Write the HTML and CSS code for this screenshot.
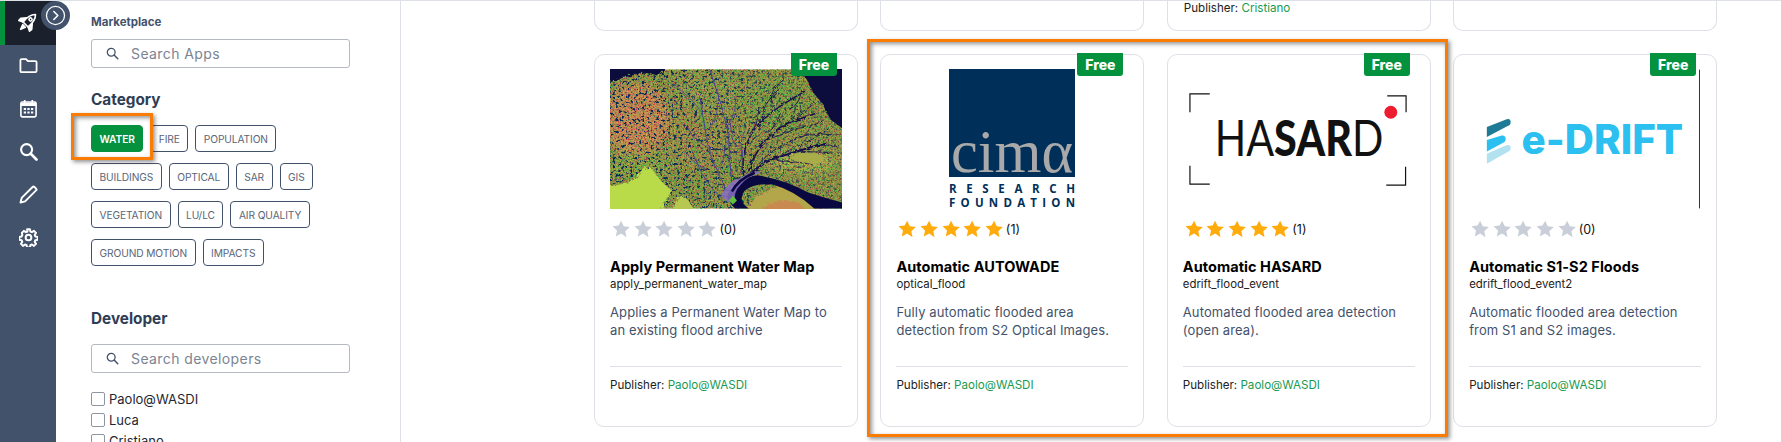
FILE: index.html
```html
<!DOCTYPE html>
<html lang="en">
<head>
<meta charset="utf-8">
<title>Marketplace</title>
<link rel="stylesheet" href="styles.css">
</head>
<body>
<svg class="defs" width="0" height="0" aria-hidden="true">
  <defs>
    <symbol id="star" viewBox="0 0 20 20"><path d="M10 .8l2.9 6.2 6.7.8-5 4.6 1.4 6.7L10 15l-6 3.3 1.4-6.7-5-4.6 6.7-.8z"/></symbol>
    <symbol id="loupe" viewBox="0 0 14 14"><circle cx="5.6" cy="5.6" r="4.2" fill="none" stroke="currentColor" stroke-width="1.4"/><path d="M8.7 8.7l4 4" stroke="currentColor" stroke-width="1.6" stroke-linecap="round"/></symbol>
    <linearGradient id="fade" x1="0" x2="1" y1="0" y2="0"><stop offset="0" stop-color="#fff"/><stop offset=".45" stop-color="#ddd"/><stop offset="1" stop-color="#555"/></linearGradient>
    <mask id="speck-mask"><rect width="234" height="140" fill="url(#fade)"/></mask>
    <filter id="mottle" x="0" y="0" width="100%" height="100%">
      <feTurbulence type="fractalNoise" baseFrequency="0.6" numOctaves="2" seed="7"/>
      <feColorMatrix values="2.6 0 0 0 -.85  0 2.4 0 0 -.72  0 0 0 0 .1  0 0 0 0 1"/>
    </filter>
    <filter id="speck" x="0" y="0" width="100%" height="100%">
      <feTurbulence type="fractalNoise" baseFrequency="0.34" numOctaves="3" seed="11"/>
      <feColorMatrix values="0 0 0 0 0  0 0 0 0 .02  0 0 0 0 .1  9 0 0 0 -5.300"/>
    </filter>
    <filter id="soft" x="-30%" y="-30%" width="160%" height="160%"><feGaussianBlur stdDeviation="5"/></filter>
    <filter id="rough" x="-10%" y="-10%" width="120%" height="120%">
      <feTurbulence type="fractalNoise" baseFrequency="0.3" numOctaves="2" seed="4" result="n"/>
      <feDisplacementMap in="SourceGraphic" in2="n" scale="6"/>
    </filter>
    <filter id="wiggle" x="-10%" y="-10%" width="120%" height="120%">
      <feTurbulence type="fractalNoise" baseFrequency="0.22" numOctaves="2" seed="9" result="n"/>
      <feDisplacementMap in="SourceGraphic" in2="n" scale="4"/>
    </filter>
  </defs>
</svg>

<nav class="rail">
  <a class="rail-item active">
    <svg class="rail-icon rocket" viewBox="0 0 20 20"><g transform="rotate(45 10 10)" fill="none" stroke="#fff" stroke-width="1.600" stroke-linejoin="round"><path d="M10 -.6C13.400 2.600 14.200 7.500 13.600 13.500H6.400C5.800 7.500 6.600 2.600 10 -.6Z"/><circle cx="10" cy="6.400" r="1.500"/><path d="M6 8L2.200 12.500 2.400 15.400 6.400 13.500ZM14 8l3.800 4.500-.2 2.900-4-1.900Z" fill="#fff"/><path d="M8.200 15.600L10 20.400l1.800-4.800Z" fill="#fff"/></g></svg>
  </a>
  <a class="rail-item"><svg class="rail-icon" viewBox="0 0 20 20"><path d="M1.500 4.500q0-1.300 1.300-1.300h4.600l2 2.200h7.800q1.300 0 1.300 1.300v9q0 1.300-1.300 1.300H2.800q-1.300 0-1.300-1.300z" fill="none" stroke="#fff" stroke-width="1.900" stroke-linejoin="round"/></svg></a>
  <a class="rail-item"><svg class="rail-icon" viewBox="0 0 20 20"><rect x="2" y="3.200" width="16" height="15.600" rx="1.600" fill="none" stroke="#fff" stroke-width="1.700"/><path d="M2 3.800h16v3.600H2z" fill="#fff"/><path d="M6 1v3M14 1v3" stroke="#fff" stroke-width="1.800"/><path d="M5 9.600h2.400v2H5zM8.800 9.600h2.400v2H8.800zM12.600 9.600H15v2h-2.400zM5 13.200h2.400v2H5zM8.800 13.200h2.400v2H8.800zM12.600 13.200H15v2h-2.400z" fill="#fff"/></svg></a>
  <a class="rail-item"><svg class="rail-icon" viewBox="0 0 20 20"><circle cx="8" cy="8" r="5.800" fill="none" stroke="#fff" stroke-width="2.200"/><path d="M12.400 12.400l6 6" stroke="#fff" stroke-width="2.800" stroke-linecap="round"/></svg></a>
  <a class="rail-item"><svg class="rail-icon" viewBox="0 0 20 20"><path d="M1.600 18.400l1.200-4.800L14.600 1.800q.7-.7 1.400 0L18.200 4q.7.7 0 1.400L6.400 17.200z" fill="none" stroke="#fff" stroke-width="2" stroke-linejoin="round"/></svg></a>
  <a class="rail-item"><svg class="rail-icon" viewBox="0 0 20 20"><circle cx="10" cy="10" r="3" fill="none" stroke="#fff" stroke-width="2.100"/><path d="M8.500 1.200h3l.5 2.500 1.600.7 2.200-1.400 2.100 2.100-1.400 2.200.7 1.600 2.500.5v3l-2.500.5-.7 1.600 1.400 2.200-2.100 2.100-2.200-1.400-1.600.7-.5 2.500h-3l-.5-2.500-1.600-.7-2.200 1.400-2.100-2.100 1.400-2.200-.7-1.600-2.500-.5v-3l2.500-.5.7-1.600L3 5.100l2.100-2.100 2.200 1.400 1.600-.7z" fill="none" stroke="#fff" stroke-width="2.100" stroke-linejoin="round"/></svg></a>
</nav>
<button class="rail-toggle" type="button" aria-label="Expand">
  <svg viewBox="0 0 20 20"><circle cx="10" cy="10" r="8.600" fill="none" stroke="#fff" stroke-width="1.200"/><path d="M8.400 6.200l3.800 3.800-3.800 3.800" fill="none" stroke="#fff" stroke-width="1.500" stroke-linecap="round" stroke-linejoin="round"/></svg>
</button>

<aside class="filters">
  <h1 class="eyebrow">Marketplace</h1>
  <label class="search"><svg class="search-icon"><use href="#loupe"/></svg><input type="text" placeholder="Search Apps"></label>
  <h2 class="section-title">Category</h2>
  <div class="chips">
    <span class="chip chip-active">WATER</span><span class="chip">FIRE</span><span class="chip">POPULATION</span>
    <span class="chip">BUILDINGS</span><span class="chip">OPTICAL</span><span class="chip">SAR</span><span class="chip">GIS</span>
    <span class="chip">VEGETATION</span><span class="chip">LU/LC</span><span class="chip">AIR QUALITY</span>
    <span class="chip">GROUND MOTION</span><span class="chip">IMPACTS</span>
  </div>
  <h2 class="section-title developer">Developer</h2>
  <label class="search"><svg class="search-icon"><use href="#loupe"/></svg><input type="text" placeholder="Search developers"></label>
  <ul class="checks">
    <li><label><input type="checkbox">Paolo@WASDI</label></li>
    <li><label><input type="checkbox">Luca</label></li>
    <li><label><input type="checkbox">Cristiano</label></li>
  </ul>
</aside>

<main class="market">
  <div class="grid">
    <div class="stub"></div>
    <div class="stub"></div>
    <div class="stub"><p class="publisher">Publisher: <a>Cristiano</a></p></div>
    <div class="stub"></div>

    <article class="card">
      <span class="badge">Free</span>
      <div class="media">
        <svg class="delta" viewBox="0 0 234 140" role="img" aria-label="Satellite image of a river delta">
          <rect width="234" height="140" fill="#6f7634"/>
          <g filter="url(#soft)">
            <ellipse cx="26" cy="50" rx="34" ry="36" fill="#c8664a"/>
            <ellipse cx="88" cy="62" rx="26" ry="38" fill="#8a7038"/>
            <ellipse cx="100" cy="22" rx="34" ry="20" fill="#76803a"/>
            <ellipse cx="165" cy="36" rx="30" ry="26" fill="#5f8432"/>
            <ellipse cx="30" cy="98" rx="30" ry="14" fill="#6e8a36"/>
            <ellipse cx="140" cy="70" rx="24" ry="20" fill="#7d7238"/>
            <ellipse cx="195" cy="92" rx="32" ry="12" fill="#9a9c40"/>
          </g>
          <rect width="234" height="140" filter="url(#mottle)" opacity=".42"/>
          <g mask="url(#speck-mask)"><rect width="234" height="140" filter="url(#speck)"/></g>
          <g filter="url(#rough)">
            <path d="M192 -4H238V62L222 50 214 34 204 22Z" fill="#0a0a3c"/>
            <path d="M-4 -4H58L50 6 34 3 14 8 -4 14Z" fill="#0a0a3c"/>
            <path d="M-4 118Q16 116 26 110 34 96 42 100 50 112 62 122 54 136 50 144H-4Z" fill="#b9da48"/>
            <path d="M64 144Q66 128 72 128 82 130 84 144Z" fill="#b6c850"/>
            <path d="M134 144Q150 122 172 118 192 124 206 134L214 144Z" fill="#b3a548"/>
            <path d="M150 144Q165 128 190 134L200 144Z" fill="#c98a50"/>
            <path d="M180 88q10-6 26-4l14 6-12 6q-14 2-28-8z" fill="#a9ad48"/>
          </g>
          <path d="M88 28Q92 40 96 50L100 58 94 62 90 44Z" fill="#5fb03a" opacity=".75"/>
          <path d="M84 70l6 30 4 34M118 90l4 30" stroke="#59b53c" stroke-width="1.400" fill="none" opacity=".7"/>
          <g filter="url(#wiggle)" fill="none" stroke-linecap="round">
            <g stroke="#4a3a96">
              <path stroke-width="1.100" d="M124 120C119 95 123 72 116 50 111 30 106 15 100 0"/>
              <path stroke-width="1" d="M118 122C110 106 104 96 100 80 96 60 92 40 90 22"/>
              <path stroke-width=".9" d="M114 130C100 120 90 102 84 84"/>
              <path stroke-width=".8" d="M100 80C92 74 84 70 78 58M116 60C124 50 128 40 126 28M108 102C116 96 114 84 118 72M90 40C84 30 74 24 64 14M100 60C106 50 110 40 108 30M96 100C88 96 82 92 76 82"/>
              <path stroke-width=".9" d="M132 104C136 90 128 74 136 62M128 78C120 70 124 60 120 50"/>
            </g>
            <g stroke="#15104f">
              <path stroke-width="2.200" d="M125 122C138 106 150 96 165 90 182 84 198 80 216 74"/>
              <path stroke-width="1.600" d="M140 102C145 86 152 76 166 63 176 53 192 50 208 44"/>
              <path stroke-width="1.400" d="M136 108C130 86 140 60 160 46 170 36 184 30 196 22"/>
              <path stroke-width=".9" d="M150 96C160 82 176 74 198 66M166 90C178 94 190 92 204 96M160 63C166 58 170 52 172 42M150 74C160 68 172 68 186 60M176 84C190 76 204 72 220 60M140 66C148 58 150 48 150 38M172 56C182 54 188 46 204 36M186 60C194 58 204 58 214 52M190 82C200 84 210 82 222 84M180 40C186 38 190 34 192 26M154 50C152 40 160 30 170 20M198 66C206 66 214 64 224 66M164 34C160 26 166 16 176 10M208 76C214 78 222 74 230 78"/>
            </g>
          </g>
          <path d="M118 128Q122 118 130 114 144 104 156 108 178 112 200 124 218 130 234 134V140H206Q186 122 164 116 146 114 136 122 128 132 140 140H126Q120 134 118 128Z" fill="#0a0840"/>
          <path d="M112 126Q120 112 130 110 146 100 152 104 138 108 132 116 124 124 126 134 118 136 112 126Z" fill="#8a6ec4" opacity=".85"/>
          <path d="M123 123C128 113 136 108 146 104" stroke="#0a0840" stroke-width="2.600" fill="none"/>
          <path d="M120 132l4-5 4 5-4 4z" fill="#5ec23a"/>
        </svg>
      </div>
      <div class="rating">
        <svg class="star"><use href="#star"/></svg><svg class="star"><use href="#star"/></svg><svg class="star"><use href="#star"/></svg><svg class="star"><use href="#star"/></svg><svg class="star"><use href="#star"/></svg>
        <span class="count">(0)</span>
      </div>
      <h3 class="title">Apply Permanent Water Map</h3>
      <p class="code">apply_permanent_water_map</p>
      <p class="desc">Applies a Permanent Water Map to<br>an existing flood archive</p>
      <hr class="rule">
      <p class="publisher">Publisher: <a>Paolo@WASDI</a></p>
    </article>

    <article class="card">
      <span class="badge">Free</span>
      <div class="media">
        <svg class="logo-cima" viewBox="0 0 126 140" role="img" aria-label="CIMA Research Foundation">
          <rect width="126" height="108" fill="#00305a"/>
          <text class="cima-word" x="2" y="103" textLength="122" lengthAdjust="spacingAndGlyphs">cimα</text>
          <text class="cima-sub" x="0" y="124" textLength="126">RESEARCH</text>
          <text class="cima-sub" x="0" y="138" textLength="126">FOUNDATION</text>
        </svg>
      </div>
      <div class="rating gold">
        <svg class="star"><use href="#star"/></svg><svg class="star"><use href="#star"/></svg><svg class="star"><use href="#star"/></svg><svg class="star"><use href="#star"/></svg><svg class="star"><use href="#star"/></svg>
        <span class="count">(1)</span>
      </div>
      <h3 class="title">Automatic AUTOWADE</h3>
      <p class="code">optical_flood</p>
      <p class="desc">Fully automatic flooded area<br>detection from S2 Optical Images.</p>
      <hr class="rule">
      <p class="publisher">Publisher: <a>Paolo@WASDI</a></p>
    </article>

    <article class="card">
      <span class="badge">Free</span>
      <div class="media">
        <svg class="logo-full" viewBox="0 0 234 140" role="img" aria-label="HASARD">
          <path d="M7 43V24.500H27M206 26.500H225V43M7 97V115.500H27M205 116.500H224.500V98" fill="none" stroke="#111" stroke-width="1.200"/>
          <text class="hasard" x="32" y="87" textLength="170" lengthAdjust="spacingAndGlyphs"><tspan>HA</tspan><tspan class="hasard-bold">SAR</tspan><tspan>D</tspan></text>
          <circle cx="209.600" cy="43" r="6.500" fill="#ed1c2e"/>
        </svg>
      </div>
      <div class="rating gold">
        <svg class="star"><use href="#star"/></svg><svg class="star"><use href="#star"/></svg><svg class="star"><use href="#star"/></svg><svg class="star"><use href="#star"/></svg><svg class="star"><use href="#star"/></svg>
        <span class="count">(1)</span>
      </div>
      <h3 class="title">Automatic HASARD</h3>
      <p class="code">edrift_flood_event</p>
      <p class="desc">Automated flooded area detection<br>(open area).</p>
      <hr class="rule">
      <p class="publisher">Publisher: <a>Paolo@WASDI</a></p>
    </article>

    <article class="card">
      <span class="badge">Free</span>
      <div class="media">
        <svg class="logo-full" viewBox="0 0 234 140" role="img" aria-label="e-DRIFT">
          <path d="M18 58L38 50Q42 49 42 53 42 56 39 57L18 68Z" fill="#1f7a96"/>
          <path d="M18 71L33 66.500Q37 66 37 70 37 73 34 74L18 82.500Z" fill="#2cc0f0"/>
          <path d="M18 85L37 76.500Q42 75 42 79 42 82 39 83L18 95Z" fill="#b2e1ef"/>
          <text class="edrift" x="53" y="85" textLength="163" lengthAdjust="spacingAndGlyphs">e-DRIFT</text>
          <path d="M232.500 0V140" stroke="#333" stroke-width="1"/>
        </svg>
      </div>
      <div class="rating">
        <svg class="star"><use href="#star"/></svg><svg class="star"><use href="#star"/></svg><svg class="star"><use href="#star"/></svg><svg class="star"><use href="#star"/></svg><svg class="star"><use href="#star"/></svg>
        <span class="count">(0)</span>
      </div>
      <h3 class="title">Automatic S1-S2 Floods</h3>
      <p class="code">edrift_flood_event2</p>
      <p class="desc">Automatic flooded area detection<br>from S1 and S2 images.</p>
      <hr class="rule">
      <p class="publisher">Publisher: <a>Paolo@WASDI</a></p>
    </article>
  </div>
</main>

<div class="callout callout-chip"></div>
<div class="callout callout-cards"></div>
</body>
</html>
```

FILE: styles.css
```css
* { box-sizing: border-box; }
html, body { height: 442px; overflow: hidden; }
body {
  margin: 0;
  display: flex;
  position: relative;
  border-top: 1px solid #dde1e7;
  background: #fff;
  font-family: "Inter", "Open Sans", sans-serif;
  color: #43526b;
}
h1, h2, h3, p, ul { margin: 0; padding: 0; }
.defs { position: absolute; }

/* left rail */
.rail {
  flex: 0 0 56px;
  height: 441px;
  background: #43526b;
  display: flex;
  flex-direction: column;
}
.rail-item {
  height: 43px;
  padding-bottom: 2px;
  display: flex;
  align-items: center;
  justify-content: center;
  flex: none;
}
.rail-item.active {
  height: 44px;
  background: #1a202c;
  box-shadow: inset 5px 0 0 #04923e;
}
.rail-icon { width: 19px; height: 19px; }
.rocket { width: 20px; height: 20px; margin-left: -1px; overflow: visible; }
.rail-toggle {
  position: absolute;
  left: 41px;
  top: 0;
  width: 29px;
  height: 29px;
  padding: 4px;
  border: 0;
  border-radius: 50%;
  background: #43526b;
}
.rail-toggle svg { display: block; width: 100%; height: 100%; }

/* filter column */
.filters {
  flex: 0 0 345px;
  height: 441px;
  overflow: hidden;
  padding: 14px 50px 0 35px;
  border-right: 1px solid #dde1e7;
}
.eyebrow { font-size: 11.500px; line-height: 14px; font-weight: 700; color: #43526b; letter-spacing: 0; }
.search {
  display: flex;
  align-items: center;
  gap: 12px;
  height: 29px;
  margin-top: 10px;
  padding-left: 14px;
  border: 1px solid #b4b9c3;
  border-radius: 3px;
}
.search-icon { flex: none; width: 13px; height: 13px; color: #43526b; }
.search input {
  flex: 1;
  min-width: 0;
  border: 0;
  outline: 0;
  padding: 0;
  background: transparent;
  font: 400 14px "Inter", sans-serif;
  letter-spacing: .4px;
}
.search input::placeholder { color: #7b8492; opacity: 1; }
.section-title { margin-top: 22px; font-size: 15.300px; line-height: 20px; font-weight: 700; color: #2f3d55; }
.section-title.developer { margin-top: 43px; }
.chips { display: flex; flex-wrap: wrap; gap: 11px 7px; margin-top: 15px; }
.chip {
  display: flex;
  align-items: center;
  height: 27px;
  padding: 0 7.500px;
  border: 1px solid #43526b;
  border-radius: 4px;
  font-size: 10.200px;
  color: #5a6578;
  letter-spacing: -.1px;
}
.chip-active { background: #04923e; border-color: #04923e; color: #fff; font-weight: 600; }
.developer + .search { margin-top: 15px; }
.checks { list-style: none; margin-top: 18px; }
.checks li { height: 21px; }
.checks label { display: flex; align-items: center; height: 16px; font-size: 13px; color: #1f2733; gap: 4px; }
.checks input {
  appearance: none;
  flex: none;
  width: 14px;
  height: 14px;
  margin: 0;
  border: 1px solid #8f96a3;
  border-radius: 2px;
  background: #fff;
}

/* cards */
.market { flex: 1; min-width: 0; padding-left: 193px; }
.grid {
  display: grid;
  grid-template-columns: repeat(4, 264px);
  grid-template-rows: 30px 373px;
  column-gap: 22.400px;
  row-gap: 23px;
}
.stub {
  padding: 0 16px;
  border: 1px solid #dde1e7;
  border-top: 0;
  border-radius: 0 0 10px 10px;
}
.card {
  position: relative;
  padding: 14px 15px 0;
  border: 1px solid #dde1e7;
  border-radius: 10px;
  background: #fff;
}
.badge {
  position: absolute;
  top: -2px;
  right: 20px;
  width: 46px;
  height: 23px;
  display: flex;
  align-items: center;
  justify-content: center;
  border-radius: 0 0 3px 3px;
  background: #04923e;
  color: #fff;
  font-size: 14px;
  font-weight: 800;
}
.media { height: 140px; display: flex; justify-content: center; }
.media svg { display: block; height: 140px; }
.delta, .logo-full { width: 234px; }
.logo-cima { width: 126px; }
.cima-word { font: 400 62px "Liberation Serif", serif; fill: #a9a9a9; }
.cima-sub { font: 700 11.500px "Open Sans", sans-serif; fill: #00305a; }
.hasard { font: 400 50px "Lato", sans-serif; fill: #111; }
.hasard-bold { font-weight: 900; }
.edrift { font: 800 41px "Inter", sans-serif; fill: #2cc0f0; }
.rating { display: flex; align-items: center; gap: 3.300px; height: 18px; margin: 11px 0 0 2px; fill: #c9ced8; }
.rating.gold { fill: #ffab0b; }
.star { flex: none; width: 18.300px; height: 18px; }
.count { margin-left: -.500px; font-size: 12.500px; color: #111; }
.title { margin-top: 19px; font-size: 14.500px; line-height: 20px; font-weight: 700; color: #000; letter-spacing: .05px; white-space: nowrap; }
.code { margin-top: 1px; font-size: 11.400px; line-height: 13px; color: #222; white-space: nowrap; }
.desc { margin-top: 12px; font-size: 13px; line-height: 18px; letter-spacing: .12px; color: #43526b; white-space: nowrap; }
.rule { height: 1px; margin: 27px 0 0; border: 0; background: #dde1e7; }
.publisher { margin-top: 9px; font-size: 11.600px; line-height: 18px; color: #222; white-space: nowrap; }
.stub .publisher { margin-top: -2px; }
.publisher a { color: #1a9a50; }

/* annotation frames drawn over the screenshot */
.callout {
  position: absolute;
  border: 3px solid #fb7c05;
  box-shadow: 2px 2px 4px rgba(60, 60, 60, .55), inset 2px 2px 4px rgba(60, 60, 60, .55);
  pointer-events: none;
}
.callout-chip { left: 71px; top: 112px; width: 82px; height: 47px; }
.callout-cards { left: 867px; top: 38px; width: 581px; height: 398px; }
```
